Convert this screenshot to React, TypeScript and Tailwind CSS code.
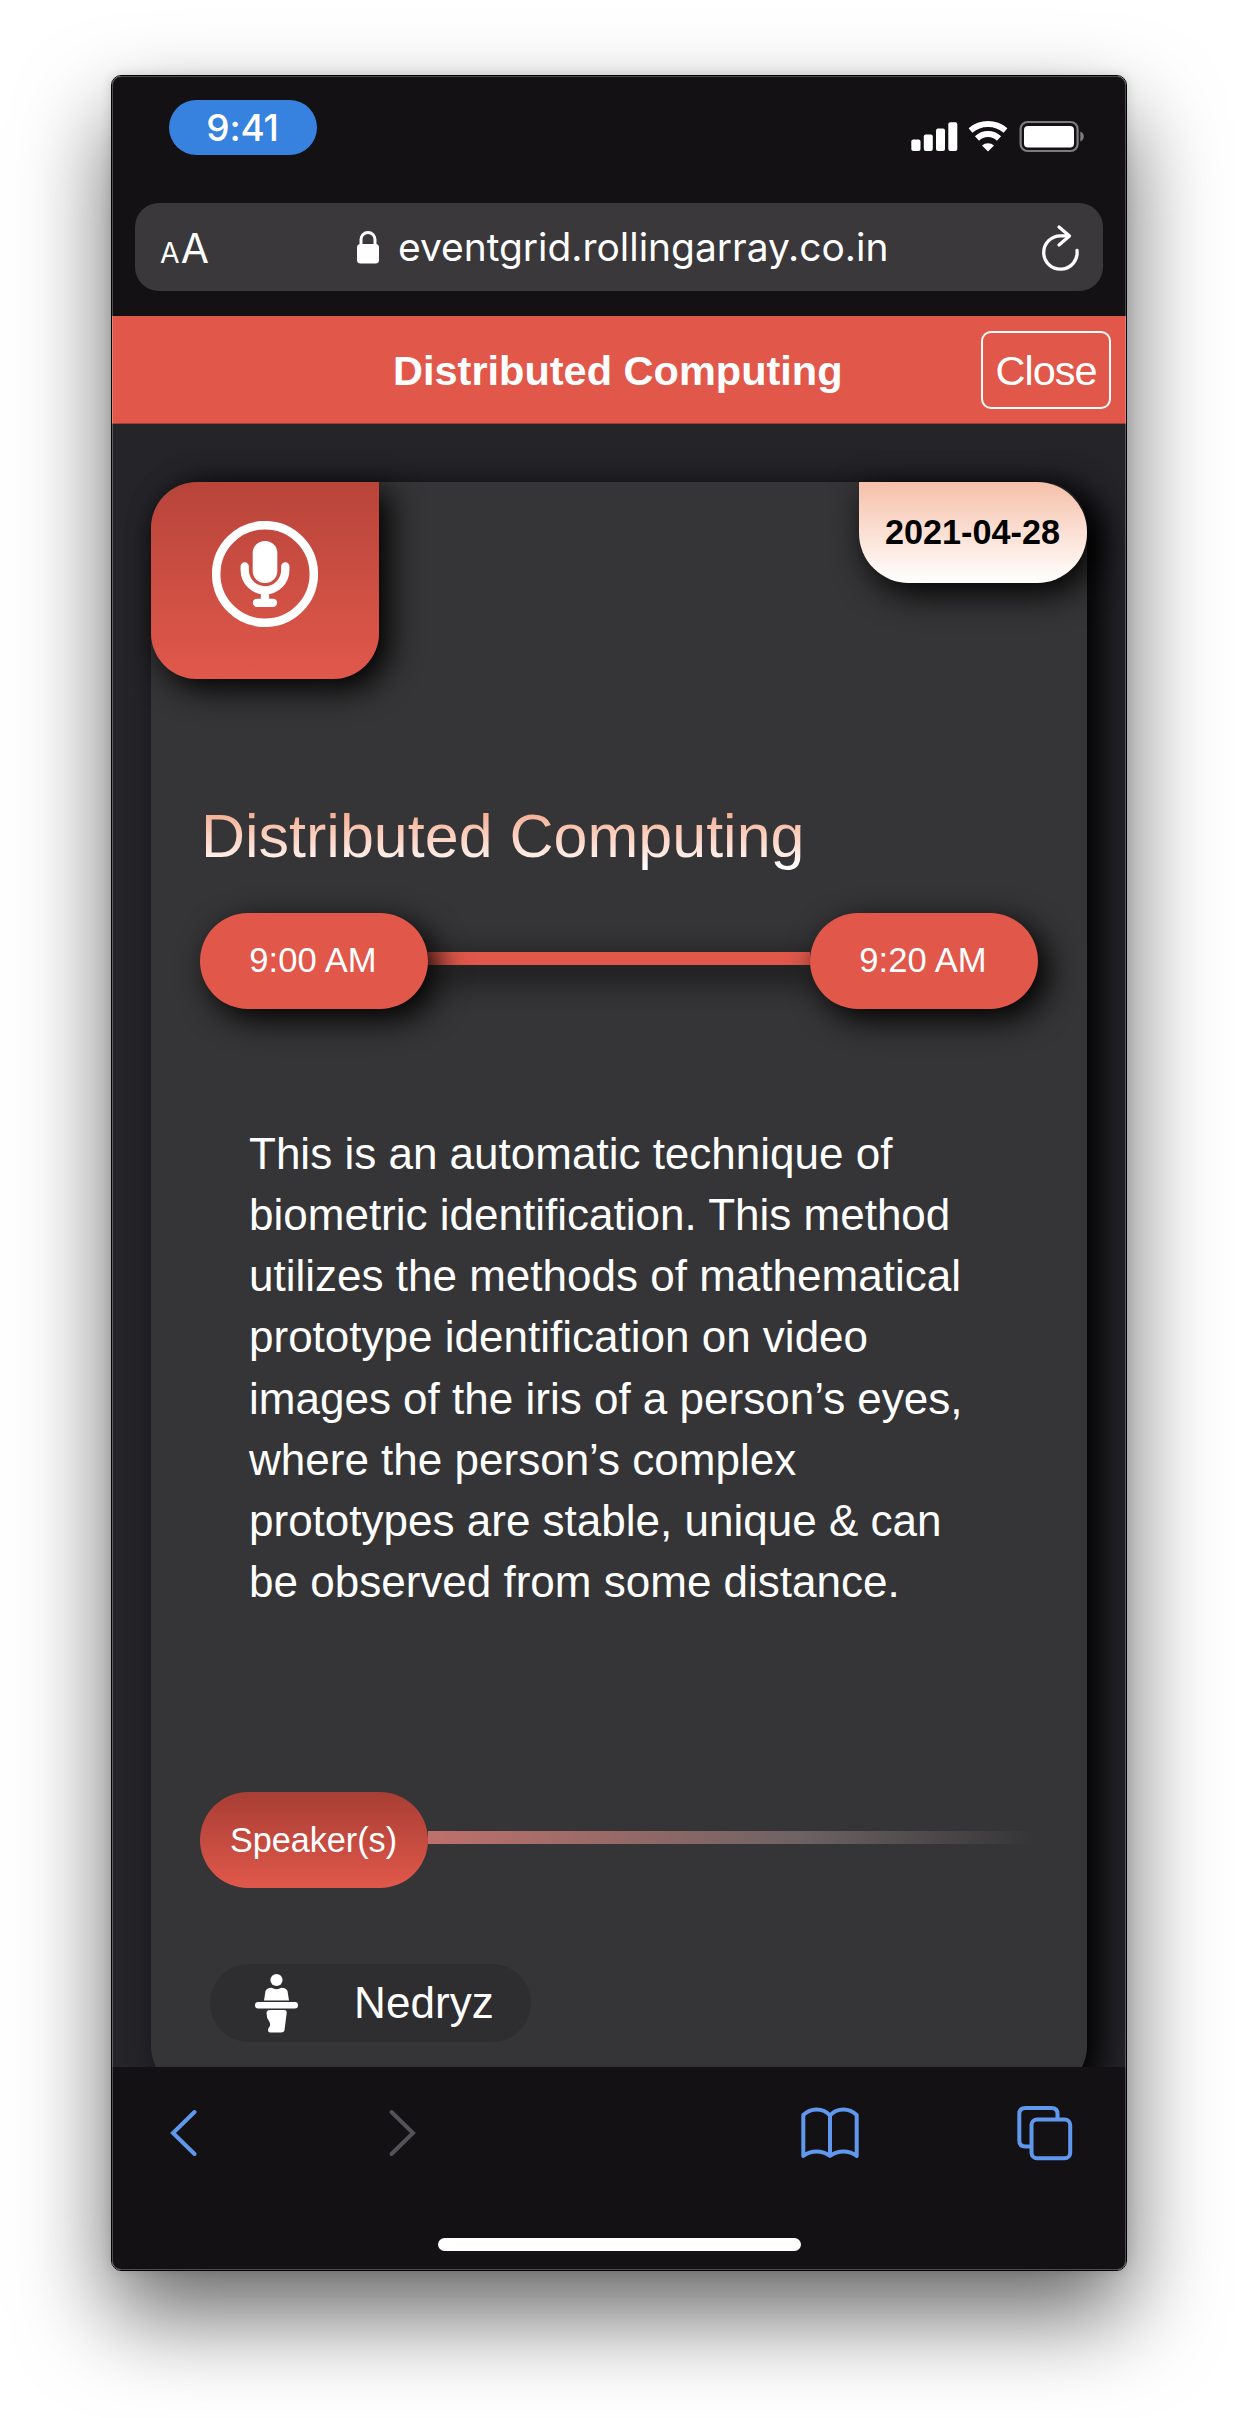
import React from "react";

const helv = "font-['Liberation_Sans',Arial,sans-serif]";

function StatusIcons() {
  return (
    <svg width="176" height="36" viewBox="0 0 176 36" fill="none">
      <rect x="1.300" y="19.5" width="9.200" height="11.5" rx="2" fill="#fff" />
      <rect x="13.800" y="14.5" width="9" height="16.5" rx="2" fill="#fff" />
      <rect x="26" y="8.500" width="9" height="22.500" rx="2" fill="#fff" />
      <rect x="38.300" y="2.300" width="9" height="28.700" rx="2" fill="#fff" />
      <path d="M60.500 10.500A27 27 0 0 1 95.500 10.500" stroke="#fff" strokeWidth="6" />
      <path d="M67 18.500A16 16 0 0 1 89 18.500" stroke="#fff" strokeWidth="6" />
      <path d="M72 25.500A9 9 0 0 1 84 25.500L78 31.500Z" fill="#fff" />
      <rect x="110.600" y="2" width="57" height="29" rx="7" stroke="#7d7b7e" strokeWidth="2.200" />
      <rect x="114" y="6" width="50" height="21.500" rx="4" fill="#fff" />
      <path d="M170.300 11.500C175 13 175 20 170.300 21.500Z" fill="#7d7b7e" />
    </svg>
  );
}

export default function App() {
  return (
    <div className={`h-[2418px] w-[1238px] overflow-hidden bg-white pl-[111px] pt-[75px] text-white ${helv}`}>
      <div className="h-[2196px] w-[1016px] rounded-[10px] border border-black shadow-[0_44px_92px_rgba(0,0,0,0.6),0_0_12px_rgba(0,0,0,0.14)]">
        <div className="relative flex h-full flex-col overflow-hidden rounded-[9px] bg-[#131114]">
          {/* Status bar */}
          <div className="flex h-[127px] shrink-0 justify-between pl-[57px] pr-[40px] pt-[24px]">
            <div className="flex h-[55px] w-[148px] items-center justify-center rounded-full bg-[#3781df] pr-[1px] font-['Inter',sans-serif] text-[37px] font-medium tracking-[-0.2px]">9:41</div>
            <div className="pt-[20px]">
              <StatusIcons />
            </div>
          </div>
          {/* Address bar */}
          <div className="mx-[23px] flex h-[88px] shrink-0 items-center rounded-[24px] bg-[#3a383b] font-['Inter',sans-serif]">
            <div className="ml-[25px] flex w-[196px] items-baseline gap-px pt-[2px] leading-none">
              <span className="text-[28.500px]">A</span>
              <span className="text-[41px]">A</span>
            </div>
            <svg width="24" height="34" viewBox="0 0 24 34" fill="none">
              <rect x="1" y="14" width="22" height="19.500" rx="3.500" fill="#fff" />
              <path d="M5 16V9.500a7 7 0 0 1 14 0V16" stroke="#fff" strokeWidth="3" />
            </svg>
            <span className="ml-[18px] whitespace-nowrap pt-[1px] text-[38.900px] leading-none">eventgrid.rollingarray.co.in</span>
            <svg className="ml-auto mr-[22px]" width="40" height="48" viewBox="0 0 40 48" fill="none" stroke="#fff" strokeWidth="3.300" strokeLinecap="round" strokeLinejoin="round">
              <path d="M36 27.500A16.700 16.700 0 1 1 19.500 12.800H27" />
              <path d="M18 4L28.500 13L18 22" />
            </svg>
          </div>
          {/* Modal header */}
          <div className="mt-[25px] flex h-[108px] shrink-0 items-center border-b border-[#9c4238] bg-[#e1584b]">
            <div className="ml-[281px] w-[588px] whitespace-nowrap pt-[2px] text-[41.500px] font-bold leading-none">Distributed Computing</div>
            <div className="flex h-[78px] w-[130px] items-center justify-center rounded-[10px] border-[2.500px] border-white pt-[2px] text-[41.500px] leading-none tracking-[-1px]">Close</div>
          </div>
          {/* Page */}
          <div className="h-[1643px] shrink-0 overflow-hidden bg-[#252429] pl-[39px] pt-[58px]">
            <div className="h-[1610px] w-[936px] rounded-[46px] bg-[#353537] shadow-[14px_8px_34px_#000]">
              <div className="flex justify-between">
                <div className="flex h-[197px] w-[228px] justify-center rounded-[46px] rounded-tr-none bg-linear-to-b from-[#b8443a] to-[#e1584b] pt-[39px] shadow-[10px_10px_32px_#000]">
                  <svg width="106" height="106" viewBox="0 0 106 106" fill="none" stroke="#fff" strokeLinecap="round">
                    <circle cx="53" cy="53" r="48.800" strokeWidth="8.500" />
                    <rect x="40.700" y="20" width="24.600" height="42" rx="12" fill="#fff" stroke="none" />
                    <path d="M32.700 45.500V49a20.300 20.300 0 0 0 40.600 0V45.500M53 70V80M45 81.800H61" strokeWidth="8.300" />
                  </svg>
                </div>
                <div className="flex h-[101px] w-[228px] items-center justify-center rounded-[50px] rounded-tl-none bg-linear-to-b from-[#f5c0a9] to-white pr-[1px] text-[34.200px] font-bold text-black shadow-[8px_10px_34px_#000]">2021-04-28</div>
              </div>
              <h1 className="ml-[50px] mt-[117px] w-[800px] bg-linear-to-b from-[#f4ad92] from-20% to-white to-90% bg-clip-text text-[61px] leading-[80px] text-transparent">Distributed Computing</h1>
              <div className="ml-[49px] mt-[37px] flex h-[96px] w-[838px] items-center">
                <div className="relative z-10 flex h-[96px] w-[228px] items-center justify-center rounded-full bg-[#e1584b] pr-[2px] text-[34.600px] tracking-[0.1px] shadow-[10px_10px_32px_#000]">9:00 AM</div>
                <div className="-mt-[5px] h-[13px] flex-1 bg-[#e1584b] shadow-[10px_10px_32px_#000]" />
                <div className="relative z-10 flex h-[96px] w-[228px] items-center justify-center rounded-full bg-[#e1584b] pr-[2px] text-[34.600px] tracking-[0.1px] shadow-[10px_10px_32px_#000]">9:20 AM</div>
              </div>
              <p className="ml-[98px] mt-[114px] w-[740px] text-[44.020px] leading-[61.120px]">
                This is an automatic technique of<br />biometric identification. This method<br />utilizes the methods of mathematical<br />prototype identification on video<br />images of the iris of a person’s eyes,<br />where the person’s complex<br />prototypes are stable, unique &amp; can<br />be observed from some distance.
              </p>
              <div className="ml-[49px] mt-[180px] flex items-center">
                <div className="flex h-[96px] w-[228px] items-center justify-center rounded-full bg-linear-to-b from-[#a83e34] to-[#e1584b] pr-[1px] pt-[1px] text-[34.200px]">Speaker(s)</div>
                <div className="-mt-[5px] h-[13px] w-[605px] bg-linear-to-r from-[#bf706c] via-[#6d6263] via-62% to-[#353537]" />
              </div>
              <div className="ml-[59px] mt-[76px] flex h-[78px] w-[321px] items-center rounded-full bg-[#2e2e30]">
                <svg className="ml-[44px]" width="45" height="60" viewBox="0 0 45 60" fill="#fff">
                  <circle cx="22.500" cy="7" r="6.100" />
                  <path d="M10 27.500L11.500 18Q12.500 15 17.500 14.800Q22.500 17.500 27.500 14.800Q32.500 15 33.500 18L35 27.500Z" />
                  <rect x="1" y="29" width="43" height="6.500" rx="3.200" />
                  <path d="M16 37H30Q33 37 32.700 40L30.500 57Q30 59.500 27 59.500H16Q13 59 14.500 55Q17.500 52 15 48Q12.500 45 12.500 40Q12.500 37 16 37Z" />
                </svg>
                <span className="ml-[55px] text-[44px] tracking-[0.1px]">Nedryz</span>
              </div>
            </div>
          </div>
          {/* Browser toolbar */}
          <div className="flex h-[132px] shrink-0 items-center bg-[#131114]">
            <svg className="ml-[57px]" width="28" height="50" viewBox="0 0 28 50" fill="none" stroke="#6098ee" strokeWidth="4" strokeLinecap="round"><path d="M25.500 4L4 25L25.500 46" /></svg>
            <svg className="ml-[191px]" width="28" height="50" viewBox="0 0 28 50" fill="none" stroke="#545256" strokeWidth="4" strokeLinecap="round"><path d="M3.500 4L25 25L3.500 46" /></svg>
            <svg className="ml-[385px]" width="58" height="52" viewBox="0 0 58 52" fill="none" stroke="#6098ee" strokeWidth="4" strokeLinejoin="round"><path d="M29 8.500Q24 2.500 15.500 2.500Q8 2.500 2.300 8V49Q8 44.500 15.500 44.500Q23 44.500 29 49Q35 44.500 42.500 44.500Q50 44.500 55.700 49V8Q50 2.500 42.500 2.500Q34 2.500 29 8.500V49" /></svg>
            <svg className="ml-[158px]" width="56" height="56" viewBox="0 0 56 56" fill="none" stroke="#6098ee" strokeWidth="4"><path d="M14 41.500H8.500Q2.300 41.500 2.300 35.500V9Q2.300 3 8.500 3H34.500Q40.500 3 40.500 9V14" /><rect x="14.500" y="14.500" width="38.700" height="38.700" rx="5.500" /></svg>
          </div>
          <div className="mx-auto mt-[39px] h-[13px] w-[363px] shrink-0 rounded-full bg-white" />
          <div className="pointer-events-none absolute inset-0 rounded-[9px] border-[1.500px] border-white/25" />
        </div>
      </div>
    </div>
  );
}
